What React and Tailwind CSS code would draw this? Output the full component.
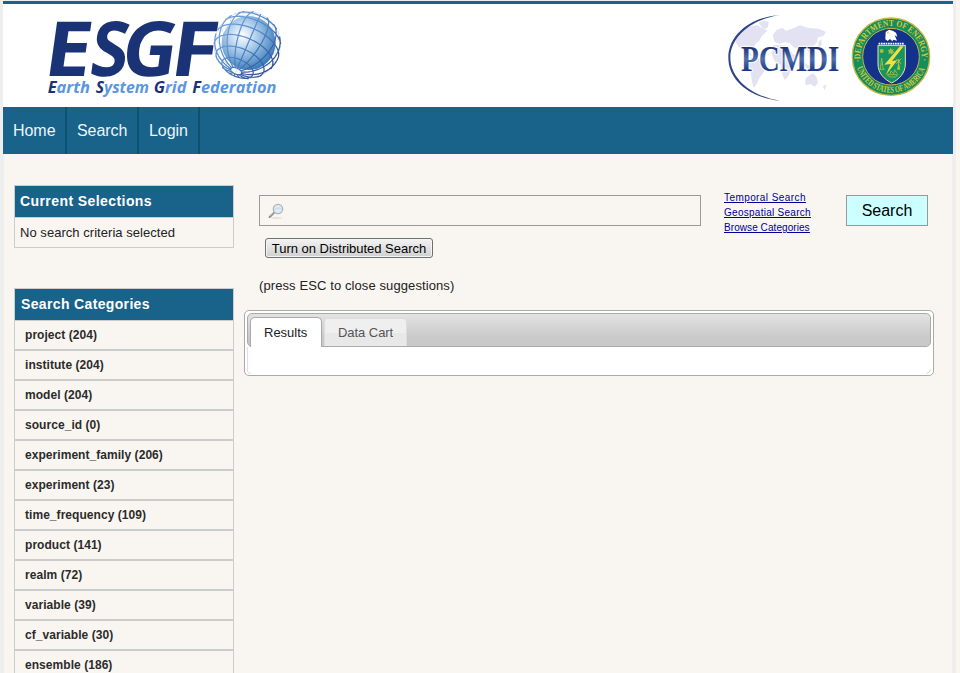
import React from "react";

const POLE = [-0.34, 0.785, 0.518];
const U = [0.9176, 0.3975, 0];
const V = [
  POLE[1] * U[2] - POLE[2] * U[1],
  POLE[2] * U[0] - POLE[0] * U[2],
  POLE[0] * U[1] - POLE[1] * U[0],
];

// Point on the unit sphere for a latitude and longitude in degrees
function spherePoint(lat, lon) {
  const a = (lat * Math.PI) / 180;
  const b = (lon * Math.PI) / 180;
  return [0, 1, 2].map(
    (i) => POLE[i] * Math.sin(a) + Math.cos(a) * (U[i] * Math.cos(b) + V[i] * Math.sin(b))
  );
}

function gridPaths() {
  let front = "";
  let back = "";
  const trace = (points) => {
    let side = null;
    points.forEach((p) => {
      const s = p[2] >= 0 ? "f" : "b";
      const cmd = `${s === side ? "L" : "M"}${(742 + p[0] * 100).toFixed(1)} ${(135 + p[1] * 101).toFixed(1)}`;
      if (s === "f") front += cmd;
      else back += cmd;
      side = s;
    });
  };
  for (let lon = 0; lon < 360; lon += 22.5) {
    const pts = [];
    for (let lat = -80; lat <= 80; lat += 4) pts.push(spherePoint(lat, lon));
    trace(pts);
  }
  for (let lat = -60; lat <= 80; lat += 20) {
    const pts = [];
    for (let lon = 0; lon <= 360; lon += 5) pts.push(spherePoint(lat, lon));
    trace(pts);
  }
  return { front, back };
}

const GRID = gridPaths();

const LETTERS = [
  { ch: "E", transform: "translate(126 229) skewX(-8) scale(1.1 1)" },
  { ch: "S", transform: "translate(263 229) skewX(-8) scale(0.9 1)" },
  { ch: "G", transform: "translate(358 229) skewX(-8) scale(1 1)" },
  { ch: "F", transform: "translate(505 229) skewX(-8) scale(1.12 1)" },
];

const WORDS = [
  { first: "E", rest: "arth", x: 143, width: 127 },
  { first: "S", rest: "ystem", x: 287, width: 160 },
  { first: "G", rest: "rid", x: 461, width: 98 },
  { first: "F", rest: "ederation", x: 577, width: 252 },
];

function EsgfLogo() {
  return (
    <svg className="block h-[103px] w-[297px]" viewBox="9 12 891 309">
      <defs>
        <radialGradient id="ball" cx="0.38" cy="0.36" r="0.68">
          <stop offset="0" stopColor="#ffffff" />
          <stop offset="0.25" stopColor="#cfe1f4" />
          <stop offset="0.6" stopColor="#84b2dc" />
          <stop offset="1" stopColor="#3577b9" />
        </radialGradient>
        <linearGradient id="wire" x1="0" y1="0" x2="1" y2="1">
          <stop offset="0" stopColor="#7eade4" />
          <stop offset="0.5" stopColor="#4f84c6" />
          <stop offset="1" stopColor="#1d3272" />
        </linearGradient>
      </defs>
      <g fontSize="228" fontWeight="700" fill="#1a3276" className="font-['Open_Sans',sans-serif]">
        {LETTERS.map((l) => (
          <text key={l.ch} transform={l.transform}>{l.ch}</text>
        ))}
      </g>
      <circle cx="742" cy="135" r="99" fill="#ffffff" fillOpacity="0.8" />
      <path d={GRID.back} fill="none" stroke="#ccd5ea" strokeWidth="2" />
      <circle cx="746" cy="129" r="81" fill="url(#ball)" />
      <path d={GRID.front} fill="none" stroke="url(#wire)" strokeWidth="3.6" />
      <g fontSize="48" fontWeight="700" fontStyle="italic" fill="#5c95e0" className="font-['Open_Sans',sans-serif]">
        {WORDS.map((w) => (
          <text key={w.first} x={w.x} y="278" textLength={w.width} lengthAdjust="spacingAndGlyphs">
            <tspan fill="#1a3276">{w.first}</tspan>{w.rest}
          </text>
        ))}
      </g>
    </svg>
  );
}

function PcmdiLogo() {
  return (
    <svg className="block h-[95px] w-[120px] overflow-visible" viewBox="0 0 360 285">
      <defs>
        <linearGradient id="pcm" x1="0" y1="0" x2="0" y2="1">
          <stop offset="0.2" stopColor="#172c6e" />
          <stop offset="0.52" stopColor="#5070ac" />
          <stop offset="0.8" stopColor="#1e3a86" />
        </linearGradient>
      </defs>
      <g fill="#e3e2f2">
        <path d="M52 72L70 55L92 48L112 46L128 55L142 62L132 72L124 80L118 92L106 102L100 118L88 122L96 138L84 134L66 120L54 108L46 94Z" />
        <path d="M116 38L134 32L146 36L144 50L134 58L124 50Z" />
        <path d="M92 142L112 142L132 156L140 168L130 188L118 204L108 226L100 234L96 214L92 190L84 166Z" />
        <path d="M158 76L170 60L186 54L198 62L216 56L240 46L266 54L296 56L318 66L310 78L294 82L290 98L276 112L268 128L258 118L246 136L236 116L220 112L210 100L194 96L178 102L164 96Z" />
        <path d="M160 106L184 104L206 112L218 132L228 136L218 156L214 178L204 200L194 210L186 192L182 164L164 154L154 130Z" />
        <path d="M256 206L270 194L280 190L290 202L294 218L284 230L272 222L256 226Z" />
        <path d="M252 158L272 170L292 176L276 182L258 174Z" />
        <path d="M308 228L320 224L314 240Z" />
        <path d="M296 94L306 88L304 106L294 114Z" />
      </g>
      <path d="M180 15C86 22 25 78 25 143C25 210 88 263 180 272C96 259 31 206 31 143C31 82 92 28 180 15Z" fill="#2c4488" />
      <text x="63" y="182" fontSize="110" fontWeight="700" stroke="#ffffff" strokeWidth="8" strokeOpacity="0.7" paintOrder="stroke" fill="url(#pcm)" textLength="295" lengthAdjust="spacingAndGlyphs" className="font-['Liberation_Serif',serif]">PCMDI</text>
    </svg>
  );
}

function DoeSeal() {
  return (
    <svg className="block h-[95px] w-[95px]" viewBox="0 0 285 285">
      <defs>
        <path id="arcTop" d="M48 159A92 92 0 1 1 228 159" />
        <path id="arcBottom" d="M34.700 171.600A108 108 0 0 0 241.300 171.600" />
      </defs>
      <circle cx="138" cy="140" r="116" fill="#158d5c" stroke="#c3b843" strokeWidth="4" />
      <circle cx="138" cy="140" r="85" fill="#14318c" stroke="#c3b843" strokeWidth="3" />
      <g fill="#d5c93f" fontSize="27" fontWeight="700" className="font-['Liberation_Serif',serif]">
        <text textLength="316" lengthAdjust="spacingAndGlyphs"><textPath href="#arcTop" startOffset="4">·DEPARTMENT OF ENERGY·</textPath></text>
        <text textLength="268" lengthAdjust="spacingAndGlyphs"><textPath href="#arcBottom" startOffset="2">UNITED STATES OF AMERICA</textPath></text>
      </g>
      <g transform="translate(-2 0)">
        <path d="M123 88L124 66L134 59L145 62L155 68L159 80L151 76L158 92L147 89L144 94L137 87L130 93Z" fill="#ffffff" />
        <path d="M134 64L126 69L132 71Z" fill="#d5c93f" />
        <path d="M103 101H180" stroke="#ffffff" strokeWidth="5" strokeDasharray="5 2" />
        <path d="M101 106H183V162C183 190 164 208 142 219C120 208 101 190 101 162Z" fill="#18945e" stroke="#e3e8bb" strokeWidth="3" />
        <path d="M167 109L120 164L139 162L124 196L159 151L143 153L178 109Z" fill="#f2df43" />
        <g fill="#a8bf45">
          <circle cx="112" cy="123" r="6" />
          <path d="M139 114L142 119L148 117L146 123L151 127L145 129L143 134L138 130L132 131L134 125L130 121L136 119Z" />
          <path d="M160 148H166V158H164L168 179H158L162 158H160Z" />
        </g>
        <g fill="none" stroke="#a8bf45" strokeWidth="2.500">
          <path d="M108 178L112 144L117 178M110 163H115M104 178H121M155 146L171 162M171 146L155 162" />
          <path d="M129 194H160L154 201H136L129 194M137 192L140 183L148 191L151 179L158 190" />
        </g>
      </g>
    </svg>
  );
}

function Magnifier() {
  return (
    <svg className="block h-4 w-4" viewBox="0 0 48 48">
      <ellipse cx="26" cy="45" rx="17" ry="2" fill="#dedbd5" />
      <path d="M5 42L19 28" stroke="#858585" strokeWidth="6" strokeLinecap="round" />
      <path d="M5 41L18 28" stroke="#d2d2d2" strokeWidth="2" />
      <circle cx="30" cy="18" r="14" fill="#dcebf8" stroke="#b4b3b1" strokeWidth="4" />
      <path d="M20 19Q30 13 40 17" stroke="#c3dcf2" strokeWidth="4" fill="none" />
    </svg>
  );
}

const CATEGORIES = [
  "project (204)",
  "institute (204)",
  "model (204)",
  "source_id (0)",
  "experiment_family (206)",
  "experiment (23)",
  "time_frequency (109)",
  "product (141)",
  "realm (72)",
  "variable (39)",
  "cf_variable (30)",
  "ensemble (186)",
];

function NavItem({ label, width }) {
  return (
    <a className={`${width} h-full border-r-2 border-[#0f4f70] pl-[10px] text-base leading-[47px] tracking-[-0.05px]`}>{label}</a>
  );
}

export default function App() {
  return (
    <div className="flex h-[673px] w-[960px] overflow-hidden bg-[#f9f6f1] pr-1 font-['Liberation_Sans',Arial,sans-serif] text-[#222222]">
      <div className="flex w-[956px] flex-col bg-[#eeeeee] px-[3px] pt-px">
        <header className="flex h-[106px] shrink-0 items-start border-t-[3px] border-[#19638a] bg-white">
          <EsgfLogo />
          <div className="ml-[420px] mt-[6px] flex gap-[5px]">
            <PcmdiLogo />
            <DoeSeal />
          </div>
        </header>
        <nav className="flex h-[47px] shrink-0 bg-[#19638a] text-[#ecf6fb]">
          <NavItem label="Home" width="w-[64px]" />
          <NavItem label="Search" width="w-[72px]" />
          <NavItem label="Login" width="w-[61px]" />
        </nav>
        <div className="ml-px mr-px flex flex-1 bg-[#f9f6f1] pl-[10px]">
          <aside className="w-[220px] shrink-0 pt-[31px]">
            <section className="h-[63px] border border-[#cccccc]">
              <h2 className="h-8 border-b border-[#cccccc] bg-[#19638a] pl-[5px] text-[14px] font-bold leading-[31px] tracking-[0.42px] text-white">Current Selections</h2>
              <p className="pl-[5px] text-[13px] leading-[29px] tracking-[0.04px]">No search criteria selected</p>
            </section>
            <section className="mt-10">
              <h2 className="h-8 border border-b-0 border-[#cccccc] bg-[#19638a] pl-[6px] text-[14px] font-bold leading-[31px] tracking-[0.35px] text-white">Search Categories</h2>
              <ul>
                {CATEGORIES.map((c) => (
                  <li key={c} className="h-[30px] border border-[#cccccc] pl-[10px] text-[12px] font-bold leading-[28px] tracking-[0.05px] text-[#2b2b2b]">{c}</li>
                ))}
              </ul>
            </section>
          </aside>
          <main className="ml-[10px] w-[690px] pt-[41px]">
            <div className="flex pl-[15px]">
              <div className="flex h-[31px] w-[442px] items-center border border-[#999999] pl-[8px]">
                <Magnifier />
              </div>
              <div className="-mt-[5px] ml-[23px] flex w-[122px] flex-col items-start text-[10px] leading-[15px] text-[#000099] underline">
                <a className="tracking-[0.42px]">Temporal Search</a>
                <a className="tracking-[0.27px]">Geospatial Search</a>
                <a className="tracking-[0.07px]">Browse Categories</a>
              </div>
              <button className="h-[31px] w-[82px] border border-[#999999] bg-[#ccffff] text-base leading-[29px] text-black">Search</button>
            </div>
            <button className="ml-[21px] mt-[3px] block h-[20px] w-[168px] rounded-[3px] border border-[#707070] bg-linear-to-b from-[#f3f3f3] via-[#e2e2e2] to-[#cfcfcf] text-[13px] leading-[19px] tracking-[-0.02px] text-black shadow-[inset_0_0_0_1px_#f4f4f4]">Turn on Distributed Search</button>
            <p className="ml-[15px] mt-[18px] text-[13px] leading-[20px] tracking-[0.1px]">(press ESC to close suggestions)</p>
            <div className="mt-[14px] h-[66px] rounded-[5px] border border-[#aaaaaa] bg-white p-[2px]">
              <div className="flex h-[34px] items-end rounded-[5px] border border-[#aaaaaa] bg-linear-to-b from-[#e3e3e3] to-[#c9c9c9] to-75% pl-[2px]">
                <div className="-mb-px h-[30px] w-[72px] rounded-t-[5px] border border-b-0 border-[#aaaaaa] bg-white pl-[13px] text-[13px] leading-[29px]">Results</div>
                <div className="ml-[2px] h-[28px] w-[83px] rounded-t-[4px] border border-b-0 border-[#dddddd] bg-linear-to-b from-[#efefef] from-50% to-[#e8e8e8] to-50% pl-[13px] text-[13px] leading-[27px] tracking-[-0.05px] text-[#555555]">Data Cart</div>
              </div>
              <div className="flex h-[27px] items-end justify-between">
                <svg className="h-[27px] w-[4px]" viewBox="0 0 4 27"><path d="M0.500 0V24Q0.500 26.500 4 26.500" fill="none" stroke="#f3d3f0" strokeWidth="1" /></svg>
                <svg className="h-[5px] w-[5px]" viewBox="0 0 5 5"><path d="M0.500 4.500Q4 4 4.500 0.500" fill="none" stroke="#cccccc" strokeWidth="0.8" /></svg>
              </div>
            </div>
          </main>
        </div>
      </div>
    </div>
  );
}
